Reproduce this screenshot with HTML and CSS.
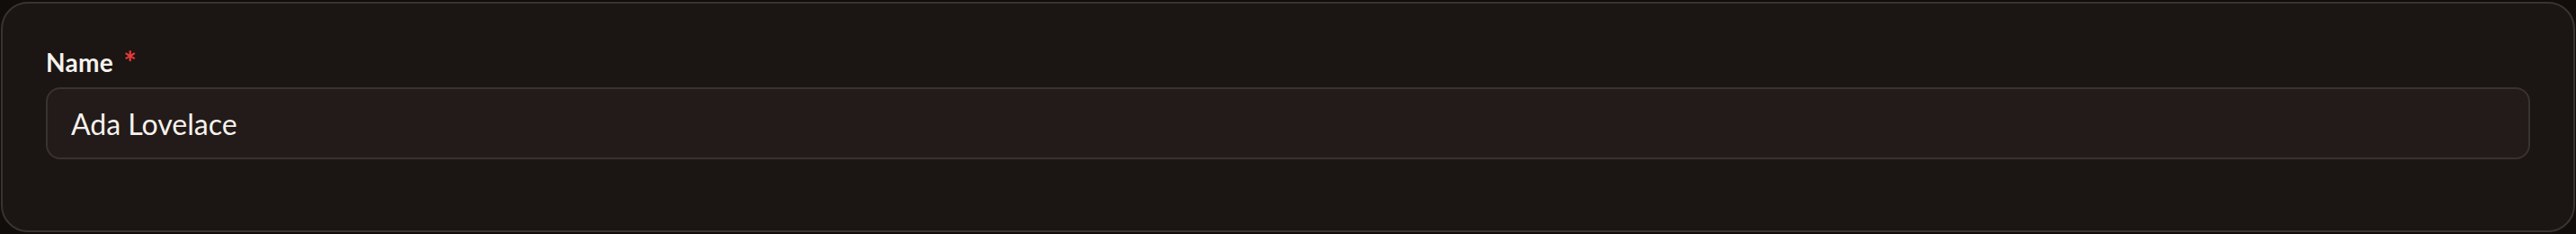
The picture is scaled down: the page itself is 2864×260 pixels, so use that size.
FILE: index.html
```html
<!DOCTYPE html>
<html lang="en">
<head>
<meta charset="utf-8">
<title>Name field</title>
<link rel="stylesheet" href="styles.css">
</head>
<body>
<div class="card">
  <label class="label" for="name">Name <span class="req">*</span></label>
  <input class="input" id="name" type="text" value="Ada Lovelace">
</div>
</body>
</html>
```
FILE: styles.css
```css
html, body {
  margin: 0;
  padding: 0;
  background: #110d0b;
}
body {
  padding: 2px 1px 2px 1px;
  font-family: Lato, "Noto Sans", sans-serif;
}
.card {
  box-sizing: border-box;
  height: 256px;
  background: #1b1613;
  border: 2px solid #3a3330;
  border-radius: 30px;
  padding: 47px 48px 0 48px;
  display: flex;
  flex-direction: column;
  gap: 10px;
}
.label {
  font-size: 28px;
  line-height: 36px;
  font-weight: 700;
  color: #f6f2ee;
  letter-spacing: 0.3px;
}
.req {
  color: #e53b3b;
  margin-left: 4px;
  font-size: 34px;
  line-height: 0;
  font-weight: 700;
  position: relative;
  top: 2px;
}
.input {
  box-sizing: border-box;
  height: 80px;
  width: 100%;
  margin: 0;
  background: #231b19;
  border: 2px solid #3a3230;
  border-radius: 16px;
  padding: 0 26px;
  font-family: Lato, "Noto Sans", sans-serif;
  font-size: 32px;
  color: #f6f2ee;
  outline: none;
}
```
